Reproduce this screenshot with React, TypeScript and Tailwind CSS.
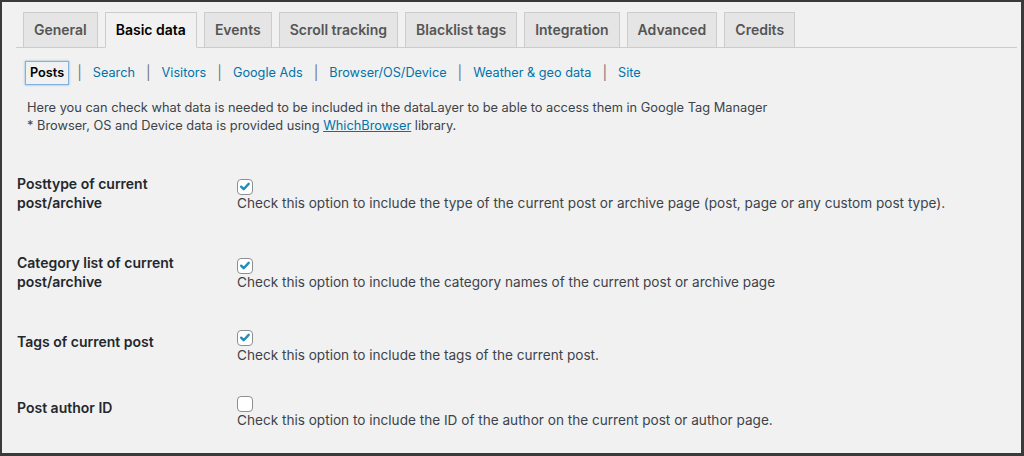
import React from 'react'

const tabs = ['General', 'Basic data', 'Events', 'Scroll tracking', 'Blacklist tags', 'Integration', 'Advanced', 'Credits']
const subTabs = ['Posts', 'Search', 'Visitors', 'Google Ads', 'Browser/OS/Device', 'Weather & geo data', 'Site']

const rows = [
  {
    label: ['Posttype of current', 'post/archive'],
    checked: true,
    desc: 'Check this option to include the type of the current post or archive page (post, page or any custom post type).'
  },
  {
    label: ['Category list of current', 'post/archive'],
    checked: true,
    desc: 'Check this option to include the category names of the current post or archive page'
  },
  {
    label: ['Tags of current post'],
    checked: true,
    desc: 'Check this option to include the tags of the current post.'
  },
  {
    label: ['Post author ID'],
    checked: false,
    desc: 'Check this option to include the ID of the author on the current post or author page.'
  }
]

function Checkbox({ checked }: { checked: boolean }) {
  return (
    <span className="block w-4 h-4 rounded-[4px] border border-[#8c8f94] bg-white">
      {checked && (
        <svg viewBox="0 0 16 16" className="w-full h-full">
          <path d="M3.6 7.6 L6.5 10.6 L12.2 4.4" fill="none" stroke="#1e8cbe" strokeWidth="2.7" strokeLinecap="round" strokeLinejoin="round" />
        </svg>
      )}
    </span>
  )
}

export default function App() {
  return (
    <div className="w-[1024px] h-[456px] overflow-hidden bg-[#f1f1f1] border-t-2 border-l-2 border-r-[3px] border-b-[3px] border-[#3a3a3a] font-['Inter','Liberation_Sans',sans-serif] text-[#3c434a]">
      <div className="pl-[14px] pr-[4px] pt-[10px]">
        {/* main tabs */}
        <div className="flex gap-[7px] pl-[7px] border-b border-[#cccccc]">
          {tabs.map(t => (
            <div
              key={t}
              className={
                t === 'Basic data'
                  ? 'px-[10px] py-[5px] -mb-px border border-[#cccccc] border-b-[#f1f1f1] bg-[#f1f1f1] text-[14px] leading-[24px] font-semibold text-black'
                  : 'px-[10px] py-[5px] -mb-px border border-[#cccccc] bg-[#e5e5e5] text-[14px] leading-[24px] font-semibold text-[#555555]'
              }
            >
              {t}
            </div>
          ))}
        </div>

        {/* sub navigation */}
        <div className="flex items-center gap-[11px] mt-[13px] pl-[9px] text-[12.7px] leading-[18px]">
          {subTabs.map((s, i) => (
            <React.Fragment key={s}>
              {i > 0 && <span className="text-[#72777c] text-[14px]">|</span>}
              {i === 0 ? (
                <span className="-mr-[3px] px-[4px] py-[2px] border border-[#7fb2e0] shadow-[0_0_2px_rgba(30,140,190,0.6)] font-semibold text-black">
                  {s}
                </span>
              ) : (
                <span className="text-[#0073aa]">{s}</span>
              )}
            </React.Fragment>
          ))}
        </div>

        {/* intro */}
        <div className="mt-[14px] pl-[11px] text-[12.8px] leading-[18px] text-[#3c434a]">
          <p>Here you can check what data is needed to be included in the dataLayer to be able to access them in Google Tag Manager</p>
          <p>
            * Browser, OS and Device data is provided using{' '}
            <span className="text-[#0073aa] underline">WhichBrowser</span> library.
          </p>
        </div>

        {/* options */}
        <div className="mt-[20px]">
          {rows.map(r => (
            <div key={r.desc} className="flex">
              <div className="w-[221px] shrink-0 pl-[1px] pt-[20px] pb-[22px] text-[14px] leading-[18.5px] font-semibold text-[#23282d]">
                {r.label.map(l => (
                  <div key={l}>{l}</div>
                ))}
              </div>
              <div className="self-center py-[15px]">
                <div className="h-[17.5px] pt-[2px]">
                  <Checkbox checked={r.checked} />
                </div>
                <div className="text-[13.6px] leading-[18px] text-[#3c434a]">{r.desc}</div>
              </div>
            </div>
          ))}
        </div>
      </div>
    </div>
  )
}
